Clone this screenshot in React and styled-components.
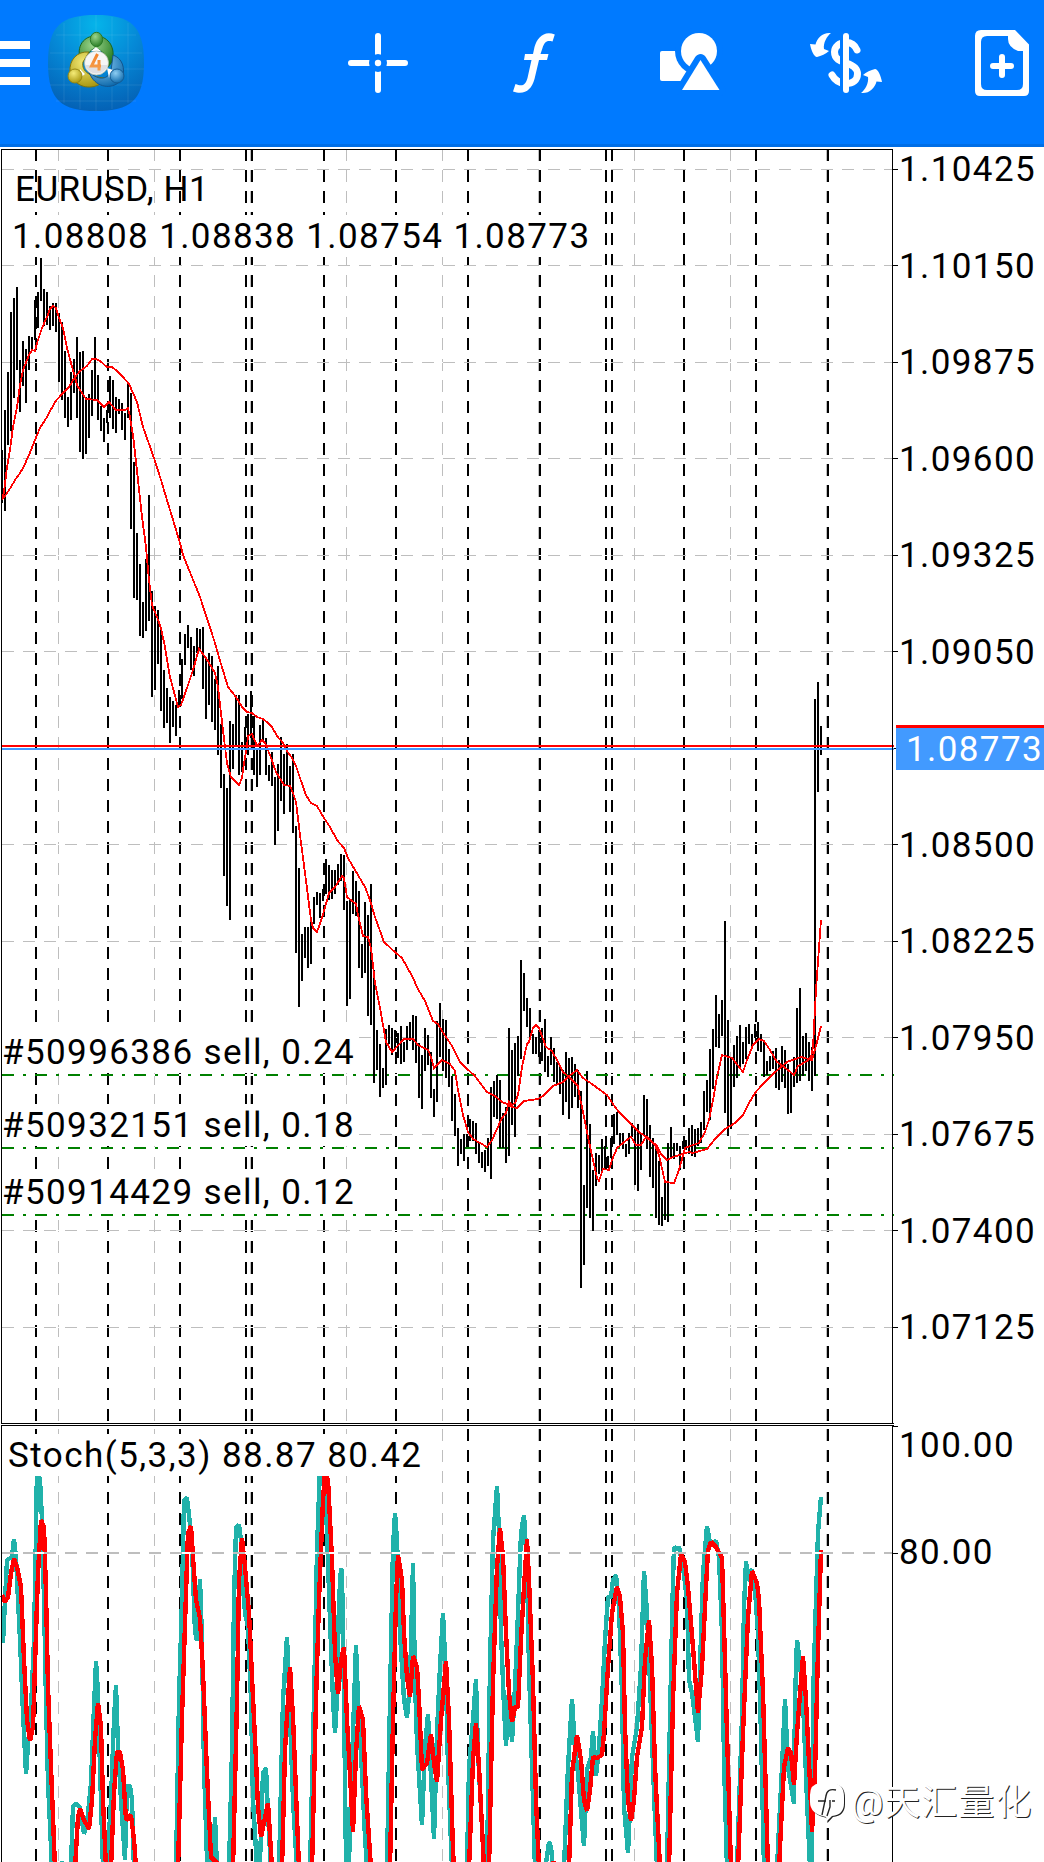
import React from "react";
import styled, { createGlobalStyle } from "styled-components";

const GlobalStyle = createGlobalStyle`
  body {
    margin: 0;
    background: #ffffff;
    overflow: hidden;
  }
`;

const Screen = styled.div`
  width: 1044px;
  height: 1862px;
  display: flex;
  flex-direction: column;
  overflow: hidden;
  font-family: Roboto, "Noto Sans CJK SC", sans-serif;
  font-size: 35px;
  line-height: 44px;
  color: #000000;
`;

const Header = styled.header`
  box-sizing: border-box;
  flex: none;
  display: flex;
  align-items: center;
  height: 147px;
  padding: 0 6px 18px 0;
  background: #007aff;
  border-bottom: 3px solid #006ee6;
`;

const MenuButton = styled.div`
  display: flex;
  flex-direction: column;
  row-gap: 10px;
  width: 30px;
  margin-right: 18px;
`;

const MenuBar = styled.span`
  height: 8px;
  background: #ffffff;
`;

const Tools = styled.div`
  display: flex;
  column-gap: 84px;
  margin-left: auto;
`;

const ToolIcon = styled.svg`
  width: 72px;
  height: 72px;
  fill: #ffffff;
`;

const Panel = styled.section`
  position: relative;
  flex: none;
  display: flex;
  height: ${(props) => props.height}px;
`;

const Plot = styled.svg`
  flex: none;
  width: 898px;
  height: 100%;
`;

const Scale = styled.div`
  display: flex;
  flex-direction: column;
  row-gap: ${(props) => props.gap}px;
  padding-top: ${(props) => props.top}px;
`;

const ScaleLabel = styled.div`
  height: 36px;
  line-height: 36px;
  margin-left: 1px;
  letter-spacing: 1.4px;
  white-space: pre;
`;

const PriceTag = styled.div`
  position: absolute;
  left: 896px;
  top: 578px;
  box-sizing: border-box;
  width: 148px;
  height: 45px;
  padding-left: 10px;
  border-top: 3px solid #ff0000;
  background: #429aff;
  color: #ffffff;
  letter-spacing: 1.4px;
  line-height: 43px;
`;

const Overlay = styled.div`
  position: absolute;
  left: ${(props) => props.x}px;
  top: ${(props) => props.y}px;
  height: 42px;
  padding: 0 4px 0 ${(props) => props.inset || 0}px;
  background: ${(props) => (props.clear ? "transparent" : "#ffffff")};
  letter-spacing: ${(props) => props.spacing}px;
  white-space: pre;
`;

const Watermark = styled.div`
  position: absolute;
  left: 809px;
  top: 357px;
  display: flex;
  align-items: center;
  column-gap: 5px;
  color: #ffffff;
  font-size: 36px;
  letter-spacing: 1px;
  text-shadow: 1px 1px 0 #222222;
  white-space: nowrap;
`;

// [high, low] of every bar, one bar each 3px
const BARS = [
  [450, 503], [410, 511], [372, 445], [312, 431], [298, 398], [287, 370],
  [360, 412], [341, 386], [349, 403], [336, 370], [337, 350], [300, 340],
  [292, 328], [258, 301], [289, 326], [292, 325], [306, 330], [303, 326],
  [303, 332], [313, 382], [322, 400], [351, 418], [397, 427], [372, 420],
  [359, 393], [337, 418], [352, 452], [351, 459], [397, 454], [394, 438],
  [370, 416], [337, 399], [375, 420], [406, 431], [418, 442], [410, 423],
  [376, 418], [380, 429], [397, 433], [399, 414], [403, 430], [413, 440],
  [382, 418], [393, 529], [462, 598], [533, 600], [564, 636], [602, 638],
  [559, 631], [495, 621], [591, 697], [606, 690], [610, 664], [627, 711],
  [670, 728], [688, 723], [697, 743], [701, 727], [705, 736], [690, 707],
  [659, 699], [634, 665], [625, 648], [637, 670], [646, 676], [628, 653],
  [629, 649], [627, 689], [658, 719], [653, 705], [656, 722], [679, 730],
  [666, 755], [724, 788], [774, 876], [788, 906], [721, 920], [724, 769],
  [695, 745], [695, 775], [742, 772], [727, 750], [714, 755], [691, 738],
  [716, 775], [750, 787], [725, 775], [719, 740], [738, 775], [765, 781],
  [752, 786], [777, 845], [764, 831], [737, 801], [754, 814], [744, 785],
  [766, 812], [754, 833], [826, 953], [868, 1007], [934, 981], [927, 958],
  [927, 968], [917, 964], [897, 924], [892, 905], [893, 918], [889, 901],
  [859, 894], [865, 900], [870, 899], [870, 894], [864, 885], [854, 881],
  [855, 910], [901, 1006], [900, 999], [871, 914], [881, 916], [891, 968],
  [944, 978], [902, 973], [915, 1016], [884, 1025], [970, 1083], [1030, 1070],
  [1044, 1097], [1068, 1088], [1029, 1085], [1025, 1044], [1028, 1055], [1030, 1050],
  [1033, 1058], [1026, 1064], [1042, 1062], [1026, 1050], [1022, 1041], [1015, 1050],
  [1016, 1063], [1043, 1098], [1055, 1109], [1028, 1071], [1035, 1065], [1052, 1098],
  [1089, 1117], [1021, 1102], [1003, 1057], [1019, 1071], [1020, 1078], [1049, 1087],
  [1076, 1121], [1094, 1136], [1128, 1166], [1139, 1154], [1134, 1161], [1134, 1147],
  [1119, 1141], [1121, 1141], [1123, 1154], [1142, 1163], [1152, 1168], [1150, 1172],
  [1138, 1166], [1087, 1179], [1081, 1117], [1075, 1119], [1080, 1148], [1113, 1148],
  [1107, 1163], [1028, 1156], [1050, 1125], [1043, 1137], [1036, 1076], [960, 1059],
  [973, 1011], [998, 1027], [1008, 1037], [1034, 1054], [1037, 1054], [1030, 1057],
  [1028, 1061], [1019, 1072], [1056, 1077], [1037, 1065], [1048, 1082], [1062, 1085],
  [1066, 1094], [1070, 1115], [1052, 1102], [1058, 1119], [1057, 1108], [1064, 1097],
  [1070, 1108], [1091, 1288], [1185, 1265], [1071, 1208], [1124, 1218], [1170, 1231],
  [1153, 1186], [1155, 1174], [1139, 1172], [1146, 1168], [1156, 1168], [1138, 1158],
  [1114, 1144], [1112, 1135], [1133, 1145], [1133, 1149], [1144, 1157], [1133, 1154],
  [1123, 1137], [1128, 1185], [1124, 1191], [1133, 1170], [1095, 1135], [1099, 1149],
  [1125, 1177], [1138, 1188], [1146, 1218], [1161, 1225], [1197, 1226], [1180, 1220],
  [1143, 1222], [1127, 1159], [1143, 1159], [1143, 1151], [1146, 1170], [1141, 1149],
  [1140, 1150], [1128, 1154], [1125, 1156], [1129, 1157], [1128, 1146], [1122, 1143],
  [1091, 1130], [1080, 1112], [1049, 1120], [1029, 1089], [995, 1047], [1014, 1048],
  [1000, 1036], [921, 1113], [1020, 1136], [1057, 1129], [1045, 1087], [1036, 1078],
  [1025, 1068], [1042, 1064], [1027, 1059], [1024, 1044], [1034, 1049], [1024, 1038],
  [1022, 1051], [1034, 1052], [1042, 1077], [1061, 1075], [1056, 1071], [1051, 1069],
  [1048, 1088], [1060, 1090], [1046, 1082], [1050, 1088], [1064, 1114], [1073, 1113],
  [1057, 1087], [1008, 1083], [988, 1081], [1036, 1076], [1033, 1071], [1042, 1081],
  [1047, 1091], [699, 1076], [682, 792], [726, 755],
];

const SLOW_MA = `2,500 7,493 11,487 15,480 20,473 23,468 29,455 35,440 40,428 47,417 55,402
  62,394 69,387 75,377 80,371 87,366 92,359 96,359 100,361 107,367 112,367 117,371 123,377
  129,384 133,393 137,402 143,427 154,458 161,480 167,500 180,543 183,555 200,597 215,643
  221,664 228,687 236,697 242,707 247,712 252,713 257,717 263,719 267,722 272,727 277,736
  283,743 287,751 292,758 296,766 300,778 306,795 311,803 317,806 324,818 330,827 337,840
  344,848 348,858 355,870 365,887 370,900 375,917 384,942 396,953 402,958 412,976 418,989
  425,1001 433,1021 438,1024 442,1031 452,1046 460,1062 467,1069 474,1075 487,1092 495,1096
  502,1102 507,1104 512,1107 517,1108 524,1101 538,1099 543,1096 553,1086 563,1082 568,1077
  577,1070 583,1078 592,1084 600,1090 607,1095 613,1104 618,1111 630,1123 640,1133 647,1137
  657,1146 661,1154 667,1160 673,1157 683,1154 689,1152 693,1153 707,1149 715,1139 725,1129
  735,1123 743,1115 749,1103 755,1093 762,1085 773,1074 787,1062 801,1057 812,1060 817,1042
  821,1026`;

const FAST_MA = `2,500 4,492 7,467 10,450 13,427 17,407 20,385 23,370 27,360 29,355 32,350
  35,351 37,343 42,328 47,317 50,309 53,306 56,308 59,318 63,328 67,348 71,363 75,377 77,385
  82,393 86,399 97,400 104,407 109,402 116,410 125,410 128,408 130,417 133,435 138,480
  142,517 146,547 149,580 152,605 157,617 161,628 165,647 170,677 178,707 181,705 187,688
  193,670 199,649 206,658 215,673 218,687 221,713 225,747 227,763 231,777 239,785 242,778
  244,763 247,747 248,736 252,734 257,746 262,740 265,743 270,755 276,772 284,785 290,786
  293,793 296,802 300,835 305,873 311,920 313,928 317,932 322,918 329,893 335,887 342,876
  344,878 347,897 356,904 358,915 363,936 368,937 371,948 375,983 380,1008 386,1042 392,1052
  404,1039 413,1039 418,1045 428,1050 431,1057 434,1068 442,1060 450,1064 455,1071 458,1090
  463,1115 468,1132 473,1139 487,1147 492,1140 502,1118 506,1113 509,1102 512,1105 515,1103
  518,1095 522,1067 527,1044 529,1042 533,1028 536,1025 539,1028 546,1047 552,1051 558,1062
  563,1072 570,1078 578,1086 580,1098 582,1107 588,1137 593,1160 597,1178 599,1181 603,1169
  609,1170 612,1160 617,1148 623,1143 631,1137 636,1145 641,1145 646,1137 655,1145 659,1155
  665,1182 674,1183 679,1170 685,1148 690,1146 699,1143 705,1132 709,1120 713,1100 717,1077
  722,1055 732,1058 743,1072 747,1060 753,1045 759,1039 764,1041 770,1050 777,1062 788,1070
  794,1075 798,1066 807,1061 811,1057 813,1047 814,1027 816,990 821,920`;

const STOCH_MAIN = `3,1643 5,1600 7,1560 12,1557 14,1539 16,1557 18,1600 20,1640 23,1713
  26,1774 28,1745 31,1710 34,1640 36,1533 37,1467 40,1480 42,1520 44,1600 46,1700 48,1783
  52,1868 62,1863 71,1867 73,1807 76,1803 80,1808 84,1834 87,1823 91,1783 94,1707 96,1661
  98,1693 100,1767 103,1868 107,1868 111,1800 114,1720 116,1685 118,1747 121,1800 125,1860
  127,1786 130,1786 132,1800 134,1870 176,1870 179,1700 182,1600 184,1500 187,1498 190,1524
  192,1547 195,1632 197,1641 200,1579 202,1640 204,1767 207,1860 213,1865 215,1817 217,1868
  229,1870 232,1750 234,1600 236,1528 239,1525 241,1540 243,1587 245,1613 248,1627 251,1700
  253,1800 257,1868 260,1862 263,1773 266,1768 268,1813 271,1870 279,1870 283,1700 287,1637
  290,1717 293,1800 297,1870 310,1870 314,1700 317,1550 320,1467 324,1450 327,1533 330,1620
  333,1700 335,1733 337,1700 339,1600 341,1568 342,1573 344,1700 346,1862 349,1862 353,1733
  356,1645 358,1700 362,1773 365,1837 367,1868 387,1868 390,1700 393,1547 395,1513 397,1540
  400,1633 404,1700 407,1718 410,1683 413,1563 415,1680 417,1743 422,1825 425,1747 428,1714
  431,1777 434,1839 437,1733 440,1667 443,1613 446,1680 448,1767 452,1868 467,1868 469,1767
  473,1720 476,1679 478,1753 482,1827 484,1868 487,1868 490,1667 493,1540 497,1486 499,1533
  501,1633 504,1707 506,1746 509,1690 512,1742 515,1687 518,1613 521,1533 524,1515 527,1567
  529,1667 533,1800 535,1868 546,1863 549,1842 551,1847 553,1868 564,1868 568,1767 572,1699
  575,1750 578,1773 581,1810 584,1846 587,1770 591,1757 593,1731 596,1776 599,1747 602,1700
  605,1640 608,1597 611,1597 613,1580 616,1575 619,1607 622,1693 624,1807 628,1853 630,1807
  632,1757 637,1727 641,1667 644,1571 647,1613 650,1683 654,1793 657,1868 667,1868 670,1717
  673,1580 674,1547 677,1550 679,1547 683,1567 687,1600 689,1680 692,1693 695,1717 698,1742
  700,1667 703,1573 707,1526 710,1543 716,1541 719,1557 722,1633 724,1760 727,1868 737,1868
  742,1717 744,1607 746,1561 748,1581 752,1569 755,1590 758,1633 761,1733 764,1868 777,1868
  782,1767 785,1699 788,1767 794,1804 795,1700 797,1640 800,1663 803,1700 807,1800 810,1868
  812,1868 813,1700 816,1600 818,1533 821,1497`;

const STOCH_SIGNAL = `2,1595 5,1602 8,1597 11,1573 14,1559 17,1567 21,1587 24,1660 27,1720
  30,1741 33,1727 36,1633 38,1573 41,1520 44,1527 46,1593 48,1687 51,1767 55,1868 75,1868
  78,1817 80,1809 84,1820 89,1829 92,1800 95,1740 98,1703 101,1727 103,1800 106,1868 111,1868
  114,1793 117,1752 120,1752 123,1770 126,1820 131,1815 134,1840 136,1868 178,1868 182,1717
  186,1593 188,1533 191,1526 193,1557 196,1600 200,1618 203,1673 207,1773 211,1857 218,1864
  233,1868 237,1700 239,1580 242,1538 245,1567 249,1613 252,1677 256,1760 258,1807 261,1837
  264,1823 268,1803 272,1868 282,1868 285,1750 290,1667 293,1717 296,1793 299,1868 312,1868
  316,1700 319,1600 323,1500 325,1472 328,1480 332,1560 335,1653 338,1694 341,1660 344,1647
  347,1720 351,1793 353,1832 356,1753 359,1706 363,1720 366,1793 371,1868 390,1868 393,1720
  396,1600 398,1555 402,1580 404,1633 407,1677 410,1697 413,1656 417,1667 419,1700 422,1770
  427,1763 431,1734 434,1763 437,1782 441,1720 446,1661 449,1720 453,1850 454,1868 469,1868
  473,1760 476,1723 479,1767 484,1868 489,1868 493,1683 497,1567 500,1528 503,1557 506,1633
  509,1693 512,1722 515,1707 518,1707 521,1640 524,1587 527,1539 529,1580 533,1683 536,1800
  539,1868 553,1863 569,1868 572,1773 577,1735 581,1760 584,1800 587,1811 590,1790 593,1757
  597,1758 602,1755 604,1733 608,1667 612,1613 617,1587 620,1597 623,1633 625,1727 628,1800
  631,1821 634,1800 637,1757 642,1727 645,1660 649,1620 652,1667 655,1767 660,1868 669,1868
  673,1700 677,1593 681,1554 685,1562 688,1587 693,1647 696,1687 698,1713 702,1667 706,1587
  708,1550 711,1542 716,1547 722,1558 724,1627 727,1733 731,1868 738,1868 743,1733 748,1617
  752,1571 757,1583 759,1600 763,1693 768,1868 779,1868 784,1767 788,1748 791,1753 794,1785
  797,1733 803,1656 806,1700 810,1783 812,1832 815,1773 818,1650 821,1550`;

const PRICES = [
  "1.10425", "1.10150", "1.09875", "1.09600", "1.09325", "1.09050", "",
  "1.08500", "1.08225", "1.07950", "1.07675", "1.07400", "1.07125",
];

const PRICE_LINES = [
  169.5, 265.5, 362.5, 458.5, 555.5, 651.5, 748.5, 844.5, 941.5, 1037.5,
  1134.5, 1230.5, 1327.5,
];

const DAYS = [36, 108, 180, 246, 252, 324, 396, 468, 540, 606, 612, 684, 756, 828];
const COLUMNS = [58.5, 154.5, 250.5, 346.5, 442.5, 538.5, 634.5, 730.5, 826.5];

const ORDERS = [
  { id: "#50996386", lots: "0.24", y: 1075 },
  { id: "#50932151", lots: "0.18", y: 1148 },
  { id: "#50914429", lots: "0.12", y: 1215 },
];

function VerticalGrid({ from, to }) {
  return (
    <g strokeDasharray="12 9">
      {COLUMNS.map((x) => (
        <path key={x} d={`M${x} ${from}V${to}`} stroke="#bebebe" />
      ))}
      {DAYS.map((x) => (
        <path key={x} d={`M${x} ${from}V${to}`} stroke="#000000" strokeWidth="2" />
      ))}
    </g>
  );
}

function PricePlot() {
  return (
    <Plot viewBox="0 147 898 1277" fill="none" shapeRendering="crispEdges">
      <VerticalGrid from={149} to={1422} />
      {PRICE_LINES.map((y) => (
        <g key={y}>
          <path d={`M2 ${y}H892`} stroke="#ffffff" />
          <path d={`M2 ${y}H892`} stroke="#bebebe" strokeDasharray="12 9" />
          <path d={`M892 ${y}h6`} stroke="#000000" />
        </g>
      ))}
      {ORDERS.map((order) => (
        <g key={order.id} strokeWidth="2">
          <path d={`M2 ${order.y}H892`} stroke="#ffffff" />
          <path
            d={`M2 ${order.y}H894`}
            stroke="#008000"
            strokeDasharray="12 9 3 9"
          />
        </g>
      ))}
      <path
        d={BARS.map(([high, low], i) => `M${2 + i * 3} ${high}V${low}`).join("")}
        stroke="#000000"
        strokeWidth="2"
      />
      <polyline points={SLOW_MA} stroke="#ff0000" strokeWidth="1.8" />
      <polyline points={FAST_MA} stroke="#ff0000" strokeWidth="1.8" />
      <path d="M1 746H894" stroke="#ff0000" strokeWidth="2" />
      <path d="M1 749H894" stroke="#429aff" strokeWidth="2" />
      <path d="M1.5 1423V149.5H892.5V1423M1 1423.5H894" stroke="#000000" />
    </Plot>
  );
}

function StochPlot() {
  return (
    <Plot viewBox="0 1424 898 438" fill="none" shapeRendering="crispEdges">
      <VerticalGrid from={1429} to={1870} />
      <polyline
        points={STOCH_MAIN}
        stroke="#20b2aa"
        strokeWidth="4.4"
        strokeLinejoin="bevel"
      />
      <polyline
        points={STOCH_SIGNAL}
        stroke="#ff0000"
        strokeWidth="4.4"
        strokeLinejoin="bevel"
      />
      <path d="M2 1553H892" stroke="#ffffff" strokeWidth="2" />
      <path
        d="M2 1553H892"
        stroke="#bebebe"
        strokeWidth="2"
        strokeDasharray="12 9"
      />
      <path
        d="M1.5 1870V1425.5H894M892.5 1425V1870M892 1426.5h6M892 1553.5h6"
        stroke="#000000"
      />
    </Plot>
  );
}

function Logo() {
  return (
    <svg width="96" height="96" viewBox="0 0 96 96">
      <defs>
        <radialGradient id="tile" cx="50%" cy="10%" r="92%">
          <stop offset="0" stopColor="#05b4ea" />
          <stop offset="0.5" stopColor="#0588d6" />
          <stop offset="1" stopColor="#0460b4" />
        </radialGradient>
        <radialGradient id="green" cx="40%" cy="30%" r="75%">
          <stop offset="0" stopColor="#9bd58c" />
          <stop offset="1" stopColor="#23791f" />
        </radialGradient>
        <radialGradient id="yellow" cx="40%" cy="30%" r="75%">
          <stop offset="0" stopColor="#f5ec78" />
          <stop offset="1" stopColor="#a5930b" />
        </radialGradient>
        <radialGradient id="blue" cx="40%" cy="30%" r="75%">
          <stop offset="0" stopColor="#8dcdf3" />
          <stop offset="1" stopColor="#0966a9" />
        </radialGradient>
        <linearGradient id="digit" x1="0" y1="0" x2="0" y2="1">
          <stop offset="0" stopColor="#f5832a" />
          <stop offset="1" stopColor="#f4a04d" />
        </linearGradient>
      </defs>
      <path
        d="M48 0C82 0 96 10 96 48S82 96 48 96 0 86 0 48 14 0 48 0Z"
        fill="url(#tile)"
      />
      <path
        d="M16 8V88M32 2V94M48 0V96M64 2V94M80 8V88M8 20H88M2 38H94M0 54H96M2 70H94M8 86H88"
        stroke="#ffffff"
        strokeOpacity="0.09"
      />
      <g strokeWidth="1">
        <path
          d="M32 44C28 28 39 20 49 21C61 22 68 33 64 47L60 52C60 42 55 35 47 33C42 35 38 42 34 44Z"
          fill="url(#green)"
          stroke="#1d641b"
        />
        <path
          d="M22 57C21 45 29 36 41 37L35 47C33 57 43 62 57 63C55 71 39 76 29 68Z"
          fill="url(#yellow)"
          stroke="#80750b"
        />
        <path
          d="M65 40C74 43 78 53 74 64C66 75 51 73 44 63L40 56C49 65 59 66 63 56Z"
          fill="url(#blue)"
          stroke="#12568f"
        />
        <path d="M43 36L48 32L53 36ZM32 54L37 59L32 63ZM59 53L65 55L61 63Z" fill="#ffffff" />
        <ellipse cx="48.500" cy="24.500" rx="6.200" ry="7.200" fill="url(#green)" stroke="#2b7a29" />
        <circle cx="27" cy="61" r="7" fill="url(#yellow)" stroke="#978711" />
        <circle cx="69" cy="61" r="7" fill="url(#blue)" stroke="#155c94" />
      </g>
      <circle cx="48.500" cy="48" r="12" fill="#f6f6f6" stroke="#b8bda9" strokeWidth="0.7" />
      <path d="M37 50H60A12 12 0 0 1 37 50Z" fill="#dedfe3" />
      <path
        d="M49.500 39L43.500 51H53M51 45V55.500"
        fill="none"
        stroke="url(#digit)"
        strokeWidth="3"
      />
    </svg>
  );
}

const ICON_BOX = "-36 -36 72 72";

function CrosshairIcon() {
  return (
    <ToolIcon viewBox={ICON_BOX}>
      <path
        d="M0 -27V-6M0 6V27M-27 0H-6M6 0H27"
        stroke="#ffffff"
        strokeWidth="6"
        strokeLinecap="round"
      />
      <circle r="9" fill="#007aff" />
      <circle r="3.200" />
    </ToolIcon>
  );
}

function FunctionIcon() {
  return (
    <ToolIcon viewBox={ICON_BOX}>
      <path
        d="M18.500 -21.500L20.800 -28.500C10 -33 3 -25 0.500 -16L-1 -9H-9L-10 -3H-2.500L-6.500 15C-8.500 22 -11.500 24 -18.500 21L-21 28.500C-9.500 32.500 -2.500 27 0.500 16L5 -3H13L14.500 -9H6.500L8.500 -15C10.500 -21 12.500 -23 18.500 -21.500Z"
      />
    </ToolIcon>
  );
}

function ShapesIcon() {
  return (
    <ToolIcon viewBox={ICON_BOX}>
      <path d="M-28 -12H0V18H-28Q-30 18 -30 16V-10Q-30 -12 -28 -12Z" />
      <circle cx="9" cy="-12" r="24" fill="#007aff" />
      <circle cx="9" cy="-12" r="18" />
      <path
        d="M10.500 -3L29.500 27H-8Z"
        fill="#007aff"
        stroke="#007aff"
        strokeWidth="12"
        strokeLinejoin="round"
      />
      <path d="M10.500 -3L29.500 27H-8Z" />
    </ToolIcon>
  );
}

function TradeIcon() {
  const arrow =
    "M-15 -30C-23 -31 -29 -25 -30.500 -18.500L-36 -19C-35 -13 -32 -6 -29 -6C-25 -7 -20 -9 -17 -12L-22 -14C-23 -20 -19 -27 -15 -30Z";
  return (
    <ToolIcon viewBox={ICON_BOX}>
      <path
        d="M11 -13C9 -18 5 -20.500 0 -20.500C-7 -20.500 -11.500 -16 -11.500 -11C-11.500 -4 -6 -2 0 0C7 2 11.500 5 11.500 11C11.500 17 7 20.500 0 20.500C-6 20.500 -11 17.500 -14 12"
        fill="none"
        stroke="#ffffff"
        strokeWidth="7"
        strokeLinecap="round"
      />
      <path d="M-6 -28H-3V28H-6Z" fill="#007aff" />
      <path d="M0 -27V27" stroke="#ffffff" strokeWidth="6" strokeLinecap="round" />
      <path d={arrow} />
      <path d={arrow} transform="rotate(180)" />
    </ToolIcon>
  );
}

function NewOrderIcon() {
  return (
    <ToolIcon viewBox={ICON_BOX}>
      <path
        fillRule="evenodd"
        d="M-21 -33H13L27 -18.500V28Q27 33 22 33H-22Q-27 33 -27 28V-27Q-27 -33 -21 -33ZM6 -27H-15Q-21 -27 -21 -21V21Q-21 27 -15 27H15Q21 27 21 21V-12H16Q6 -16 6 -24Z"
      />
      <path
        d="M0 -6V12M-9 3H9"
        stroke="#ffffff"
        strokeWidth="6"
        strokeLinecap="round"
      />
    </ToolIcon>
  );
}

function WatermarkBadge() {
  return (
    <svg width="37" height="42" viewBox="0 0 37 42">
      <path
        d="M12 2H24Q36 2 36 16V22Q36 34 24 35L18.500 41L18 36Q2 33 2 21V14Q2 3 12 2Z"
        fill="#222222"
      />
      <path
        d="M11 1H23Q35 1 35 15V21Q35 33 23 34L18 39L17 35Q1 32 1 20V13Q1 2 11 1Z"
        fill="#ffffff"
      />
      <path
        d="M27 8Q18 6 17 14L13 33M9 19H17M21 18V25L18 34M23 19H26"
        fill="none"
        stroke="#222222"
        strokeWidth="1.400"
      />
    </svg>
  );
}

export default function App() {
  return (
    <Screen>
      <GlobalStyle />
      <Header>
        <MenuButton>
          <MenuBar />
          <MenuBar />
          <MenuBar />
        </MenuButton>
        <Logo />
        <Tools>
          <CrosshairIcon />
          <FunctionIcon />
          <ShapesIcon />
          <TradeIcon />
          <NewOrderIcon />
        </Tools>
      </Header>

      <Panel height={1277}>
        <PricePlot />
        <Scale top={5} gap={60.5}>
          {PRICES.map((price, index) => (
            <ScaleLabel key={index}>{price}</ScaleLabel>
          ))}
        </Scale>
        <PriceTag>1.08773</PriceTag>
        <Overlay x={2} y={68} inset={10} spacing={1.4}>
          1.08808 1.08838 1.08754 1.08773
        </Overlay>
        <Overlay x={2} y={21} inset={13} spacing={0.5} clear>
          EURUSD, H1
        </Overlay>
        {ORDERS.map((order) => (
          <Overlay key={order.id} x={2} y={order.y - 44 - 147} spacing={1.4}>
            {order.id} sell, {order.lots}
          </Overlay>
        ))}
      </Panel>

      <Panel height={438}>
        <StochPlot />
        <Scale top={4} gap={71}>
          <ScaleLabel>100.00</ScaleLabel>
          <ScaleLabel>80.00</ScaleLabel>
        </Scale>
        <Overlay x={2} y={10} inset={6} spacing={1.45}>
          Stoch(5,3,3) 88.87 80.42
        </Overlay>
        <Watermark>
          <WatermarkBadge />
          <span>@天汇量化</span>
        </Watermark>
      </Panel>
    </Screen>
  );
}
